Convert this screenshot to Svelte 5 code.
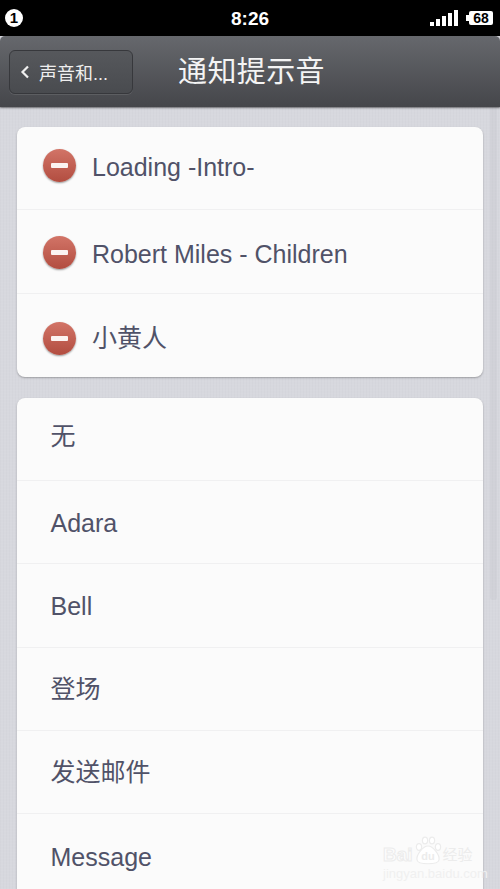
<script lang="ts">
  // shift: how far a row's content sits from its centre in the screenshot
  // textShift: how far the label sits from the minus icon
  const selected = [
    { name: 'Loading -Intro-', shift: -2.5, textShift: 2 },
    { name: 'Robert Miles - Children', shift: 0.5, textShift: 2 },
    { name: '小黄人', shift: 3, textShift: -2.5 }
  ];
  const tones = [
    { name: '无', shift: -4.5 },
    { name: 'Adara', shift: 1.5 },
    { name: 'Bell', shift: 1.5 },
    { name: '登场', shift: -2 },
    { name: '发送邮件', shift: -2 },
    { name: 'Message', shift: 2 }
  ];
  const bars = [4, 7, 10, 13, 16];

  const nudge = (shift: number) =>
    shift > 0 ? `padding-top: ${shift * 2}px` : `padding-bottom: ${-shift * 2}px`;
</script>

<div class="phone">
  <header class="status">
    <span class="badge">1</span>
    <span class="time">8:26</span>
    <div class="status-right">
      <div class="signal">
        {#each bars as h}
          <i style="height: {h}px"></i>
        {/each}
      </div>
      <div class="battery"><span>68</span></div>
    </div>
  </header>

  <nav class="titlebar">
    <button class="back">
      <svg width="10" height="14" viewBox="0 0 10 14"><path d="M8 1.5 L2.5 7 L8 12.5" fill="none" stroke="#f0f0f0" stroke-width="2.2" /></svg>
      <span>声音和...</span>
    </button>
    <h1>通知提示音</h1>
  </nav>

  <main>
    <section class="card first">
      {#each selected as item}
        <div class="row selected" style={nudge(item.shift)}>
          <span class="remove"><b></b></span>
          <span class="label" style={nudge(item.textShift)}>{item.name}</span>
        </div>
      {/each}
    </section>

    <section class="card">
      {#each tones as item}
        <div class="row plain" style={nudge(item.shift)}>
          <span class="label">{item.name}</span>
        </div>
      {/each}
    </section>
  </main>

  <div class="scrollbar"></div>

  <div class="watermark">
    <div class="mark-top">
      <span class="bai">Bai</span>
      <svg width="28" height="29" viewBox="0 0 28 29">
        <ellipse cx="5" cy="11" rx="2.6" ry="3.4" fill="#fff" stroke="#ececec" stroke-width="1.2" />
        <ellipse cx="11" cy="4.5" rx="2.6" ry="3.4" fill="#fff" stroke="#ececec" stroke-width="1.2" />
        <ellipse cx="18" cy="4.5" rx="2.6" ry="3.4" fill="#fff" stroke="#ececec" stroke-width="1.2" />
        <ellipse cx="24" cy="11" rx="2.6" ry="3.4" fill="#fff" stroke="#ececec" stroke-width="1.2" />
        <path d="M14 10 C9 10 2 19 3 24 C4 29 24 29 25 24 C26 19 19 10 14 10 Z" fill="#fff" stroke="#ececec" stroke-width="1.2" />
        <text x="14" y="24" text-anchor="middle" font-size="11" font-weight="700" fill="#ececec">du</text>
      </svg>
      <span class="cn">经验</span>
    </div>
    <div class="mark-url">jingyan.baidu.com</div>
  </div>
</div>

<style>
  :global(body) {
    margin: 0;
    background: #d7d8de;
  }

  .phone {
    position: relative;
    width: 500px;
    height: 889px;
    overflow: hidden;
    font-family: "Liberation Sans", "Noto Sans CJK SC", sans-serif;
    background-color: #d7d8de;
    background-image:
      repeating-linear-gradient(0deg, rgba(255, 255, 255, 0.035) 0 1px, transparent 1px 3px),
      repeating-linear-gradient(90deg, rgba(120, 120, 135, 0.03) 0 1px, transparent 1px 3px);
  }

  .status {
    height: 36px;
    background: #000;
    color: #fff;
    display: flex;
    align-items: center;
    justify-content: space-between;
    padding: 0 7px 0 5px;
    position: relative;
  }

  .badge {
    width: 18px;
    height: 18px;
    border-radius: 50%;
    background: #fff;
    color: #000;
    font-size: 15px;
    font-weight: 700;
    text-align: center;
    line-height: 18px;
  }

  .time {
    position: absolute;
    left: 231px;
    top: 7px;
    font-size: 19px;
    font-weight: 700;
    line-height: 23px;
  }

  .status-right {
    display: flex;
    align-items: center;
    gap: 11px;
  }

  .signal {
    display: flex;
    align-items: flex-end;
    gap: 2px;
    height: 16px;
  }

  .signal i {
    display: block;
    width: 4px;
    background: #fff;
  }

  .battery {
    position: relative;
    width: 24px;
    height: 14px;
    background: #fff;
    border-radius: 2px;
    color: #000;
    font-size: 14px;
    font-weight: 700;
    line-height: 14px;
    text-align: center;
  }

  .battery::before {
    content: '';
    position: absolute;
    left: -3px;
    top: 4px;
    width: 3px;
    height: 6px;
    background: #fff;
  }

  .titlebar {
    height: 71px;
    background: linear-gradient(#66686d, #45464a);
    border-radius: 5px 5px 0 0;
    box-shadow: 0 1px 2px rgba(0, 0, 0, 0.5);
    display: flex;
    align-items: center;
    padding-left: 9px;
    position: relative;
    box-sizing: border-box;
  }

  .back {
    width: 124px;
    height: 44px;
    box-sizing: border-box;
    border: 1px solid #37383c;
    border-radius: 6px;
    background: linear-gradient(#56585c, #494b4f);
    box-shadow: 0 1px 0 rgba(255, 255, 255, 0.1);
    color: #eeeeee;
    font-family: inherit;
    font-size: 18px;
    display: flex;
    align-items: center;
    gap: 9px;
    padding: 0 0 0 10px;
  }

  h1 {
    margin: 2px 0 0 45px;
    color: #f4f4f4;
    font-size: 29px;
    font-weight: 400;
    letter-spacing: 0.4px;
    line-height: 1;
  }

  main {
    padding: 20px 17px 0;
  }

  .card {
    background: #fbfbfb;
    border-radius: 8px;
    box-shadow: 0 1px 2px rgba(0, 0, 0, 0.28);
    overflow: hidden;
  }

  .first {
    margin-bottom: 20.8px;
  }

  .row {
    box-sizing: border-box;
    display: flex;
    align-items: center;
    border-bottom: 1px solid #f0f0f1;
    color: #505268;
    font-size: 25px;
  }

  .row:last-child {
    border-bottom: 0;
  }

  .selected {
    height: 83.4px;
    padding-left: 26px;
    gap: 16px;
  }

  .plain {
    height: 83.3px;
    padding-left: 33.5px;
  }

  .plain:first-child {
    height: 83px;
  }

  .remove {
    width: 33px;
    height: 33px;
    flex: none;
    border-radius: 50%;
    background: linear-gradient(#d27467, #b24d40);
    box-shadow: 0 1px 2px rgba(0, 0, 0, 0.4);
    display: flex;
    align-items: center;
    justify-content: center;
  }

  .remove b {
    display: block;
    width: 17px;
    height: 5px;
    border-radius: 1px;
    background: #fbf3f1;
  }

  .scrollbar {
    position: absolute;
    left: 490px;
    top: 107px;
    width: 7px;
    height: 493px;
    border-radius: 0 0 3px 3px;
    background: rgba(90, 90, 110, 0.05);
  }

  .watermark {
    position: absolute;
    left: 383px;
    top: 836px;
    width: 92px;
    color: #f2f2f2;
  }

  .mark-top {
    display: flex;
    align-items: flex-end;
    gap: 1px;
    height: 29px;
    white-space: nowrap;
  }

  .bai {
    font-size: 19px;
    font-weight: 700;
    line-height: 21px;
    color: #fdfdfd;
    -webkit-text-stroke: 1px #ececec;
  }

  .mark-top .cn {
    font-size: 15px;
    line-height: 20px;
    color: #ececec;
  }

  .mark-url {
    margin-top: 3px;
    font-size: 13px;
    line-height: 12px;
    color: #f0f0f0;
    white-space: nowrap;
  }
</style>
